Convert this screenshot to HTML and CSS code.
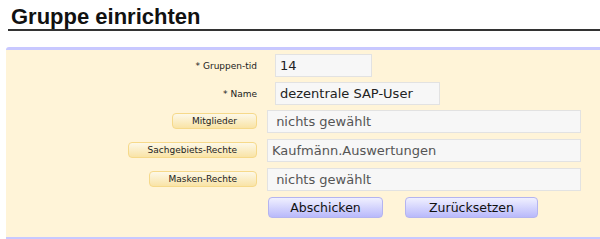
FILE: index.html
```html
<!DOCTYPE html>
<html lang="de">
<head>
  <meta charset="UTF-8">
  <title>Gruppe einrichten</title>
  <link rel="stylesheet" href="styles.css">
</head>
<body>
  <h1 class="title">Gruppe einrichten</h1>
  <form class="panel">
    <div class="grid">
      <label class="lbl" for="tid">* Gruppen-tid</label>
      <div class="row"><input class="field short" id="tid" type="text" value="14"></div>

      <label class="lbl" for="name">* Name</label>
      <div class="row"><input class="field mid" id="name" type="text" value="dezentrale SAP-User"></div>

      <div class="lbl pick"><button type="button" class="pickbtn">Mitglieder</button></div>
      <div class="row pick"><input class="field wide ro" type="text" value=" nichts gewählt" readonly></div>

      <div class="lbl pick"><button type="button" class="pickbtn">Sachgebiets-Rechte</button></div>
      <div class="row pick"><input class="field wide ro" type="text" value="Kaufmänn.Auswertungen" readonly></div>

      <div class="lbl pick"><button type="button" class="pickbtn">Masken-Rechte</button></div>
      <div class="row pick"><input class="field wide ro" type="text" value=" nichts gewählt" readonly></div>

      <div></div>
      <div class="actions">
        <button type="submit" class="act send">Abschicken</button>
        <button type="reset" class="act reset">Zurücksetzen</button>
      </div>
    </div>
  </form>
</body>
</html>
```

FILE: styles.css
```css
body {
  margin: 0;
  overflow: hidden;
  background: #fff;
  font-family: "DejaVu Sans", Verdana, sans-serif;
  color: #222;
}
.title {
  margin: 5px 0 0 8px;
  padding-left: 3px;
  font-family: "Liberation Sans", Arial, sans-serif;
  font-size: 22px;
  line-height: 24px;
  font-weight: bold;
  color: #111;
  border-bottom: 2px solid #333;
}
.panel {
  margin: 16px 0 0 6px;
  background: #fff4d8;
  border-top: 3px solid #c8c8ff;
  border-bottom: 3px solid #c8c8ff;
  border-top-left-radius: 3px;
  padding: 4px 0 19px;
}
.grid {
  display: grid;
  grid-template-columns: 251px 1fr;
  column-gap: 10px;
  row-gap: 5px;
}
.lbl {
  display: flex;
  align-items: center;
  justify-content: flex-end;
  font-size: 9px;
  color: #222;
}
.row { display: flex; align-items: flex-start; }
.row.pick, .lbl.pick { height: 24px; }
.lbl.pick { align-items: flex-start; padding-top: 3px; box-sizing: border-box; }
.field {
  box-sizing: border-box;
  height: 23px;
  padding: 0 4px;
  border: 1px solid #e2e2e2;
  background: #f7f7f7;
  font-family: "DejaVu Sans", Verdana, sans-serif;
  font-size: 13px;
  color: #222;
  outline: none;
}
.short { width: 97px; margin-left: 8px; }
.mid { width: 165px; margin-left: 8px; }
.wide { width: 314px; }
.ro { color: #555; }
.pickbtn {
  height: 16px;
  padding: 0 19px;
  border: 1px solid #f6d98a;
  border-radius: 4px;
  background: linear-gradient(#fdf8e8, #f9e3a6);
  font-family: "DejaVu Sans", Verdana, sans-serif;
  font-size: 9px;
  color: #222;
  cursor: pointer;
}
.actions { display: flex; gap: 22px; padding-left: 1px; }
.act {
  height: 21px;
  border: 1px solid #b4b4f0;
  border-radius: 4px;
  background: linear-gradient(#f0f0ff, #b9b9fb);
  font-family: "DejaVu Sans", Verdana, sans-serif;
  font-size: 12.5px;
  color: #111;
  cursor: pointer;
}
.send { width: 115px; }
.reset { width: 133px; }
```
